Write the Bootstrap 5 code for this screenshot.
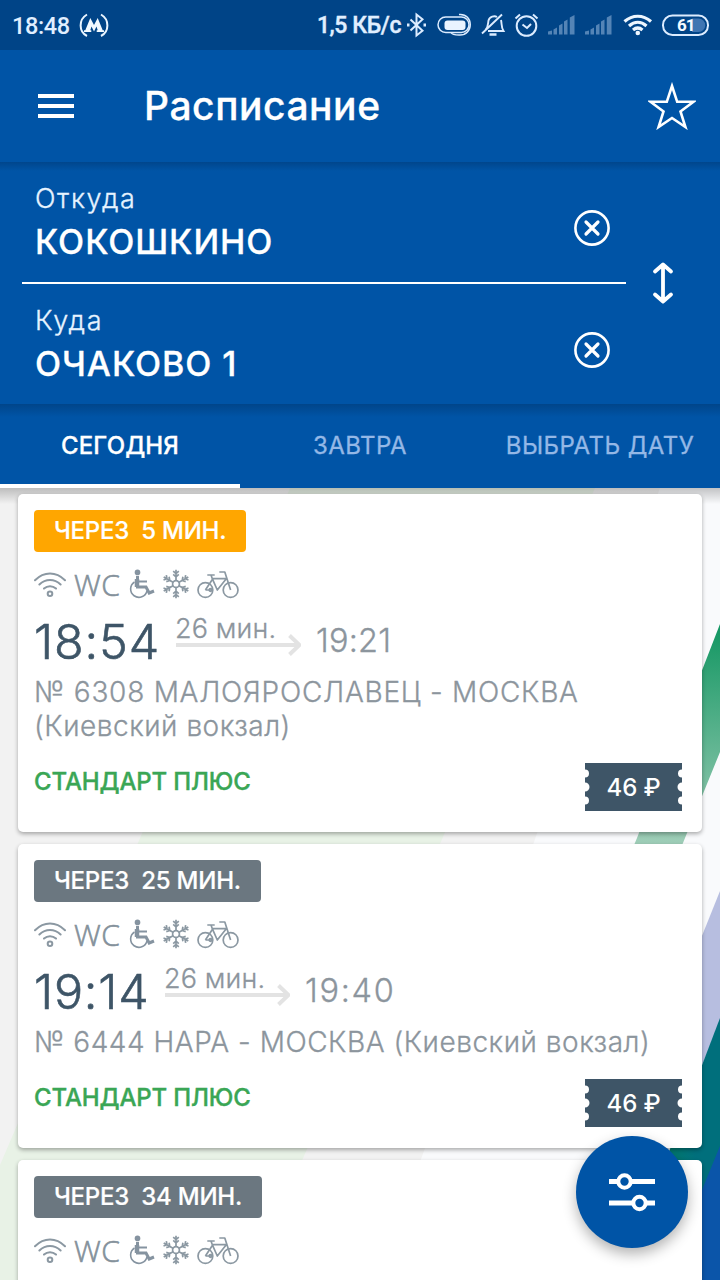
<!DOCTYPE html>
<html lang="ru">
<head>
<meta charset="utf-8">
<meta name="viewport" content="width=device-width, initial-scale=1">
<title>Расписание</title>
<link href="https://cdn.jsdelivr.net/npm/bootstrap@5.3.0/dist/css/bootstrap.min.css" rel="stylesheet">
<style>
:root{--rail:#0054a6;--ink:#3e5567;--dim:#8c959d}
body{height:1280px;overflow:hidden;background:#f9fafc;font-family:Inter,"Open Sans",sans-serif;line-height:1;color:var(--dim)}
svg{display:block;flex:none}
.statusbar{height:50px;background:#004487;color:#e0efff;font:500 23.5px/52px Roboto,sans-serif;padding:2px 4px 0 12px}
.clock{letter-spacing:-.35px}
.rate{font-size:23px;letter-spacing:-.4px;-webkit-text-stroke:.4px}
.topbar{height:112px;background:var(--rail);color:#fff;padding:0 24px 0 38px}
.title{font-size:39px;line-height:48px;font-weight:500;letter-spacing:.55px;margin-left:70px;-webkit-text-stroke:.3px}
.search{height:242px;background:linear-gradient(#00468c,#0054a6 9px);color:#fff;padding-left:22px}
.fields{width:604px}
.field{height:120px;padding:20px 16px 0 13px}
.field-from{height:122px;border-bottom:2px solid #fff}
.lbl{font-size:27px;line-height:34px;font-weight:300;letter-spacing:1.6px;margin-bottom:6px;color:#e6f3ff;-webkit-text-stroke:.3px}
.station{font-size:34px;line-height:40px;font-weight:500;letter-spacing:.95px;white-space:nowrap;-webkit-text-stroke:.3px}
.clear{margin-top:28px}
.swap{margin:98px 0 0 24px}
.tabs{height:84px;background:linear-gradient(#00458a,#0054a6 13px);color:#94b8e6;font-size:24px;font-weight:400;white-space:nowrap}
.tab-item{line-height:84px;letter-spacing:.45px;-webkit-text-stroke:.3px}
.tab-on{color:#fff;font-weight:500;letter-spacing:.1px;box-shadow:inset 0 -4px #fff}
.sheet{height:792px;overflow:hidden;padding:6px 18px 0}
.backdrop{z-index:0}
.drop{height:16px;background:linear-gradient(rgba(0,0,0,.22),rgba(0,0,0,0));z-index:0}
.trip{z-index:1;background:#fff;border-radius:5px;padding:16px 20px 21px 16px;margin-bottom:12px;box-shadow:0 2px 4px rgba(0,0,0,.32)}
.due{height:42px;border-radius:4px;background:#6b7780;color:#fff;font-size:24px;line-height:42px;font-weight:500;padding:0 20px;white-space:pre;letter-spacing:-.25px;-webkit-text-stroke:.2px}
.soon{background:#ffa600}
.amenities{height:44px;margin-top:10px}
.wc{font:300 30px/44px "Open Sans",sans-serif;color:#84919b;width:47px;margin:1px 8px 0 8px;-webkit-text-stroke:.6px #84919b;letter-spacing:.4px}
.gap-ic{margin-left:7px}
.times{height:68px}
.dep{font-size:48.5px;line-height:71px;font-weight:300;color:var(--ink);-webkit-text-stroke:.6px var(--ink);white-space:nowrap}
.dep-a{width:142px;letter-spacing:.9px}
.dep-b{width:131px;letter-spacing:.8px}
.ride{width:125px;padding-top:6px;font-size:27px;line-height:34px;font-weight:300;letter-spacing:.15px;white-space:nowrap;-webkit-text-stroke:.3px;margin-left:-1px}
.ride svg{margin:-12px 0 0 1px}
.arr{font-size:32.5px;line-height:69px;font-weight:300;margin-left:16px;-webkit-text-stroke:.3px}
.arr-a{letter-spacing:.2px}
.arr-b{letter-spacing:1.7px}
.route{font-size:28px;line-height:34px;font-weight:300;letter-spacing:.75px;white-space:nowrap;-webkit-text-stroke:.3px;position:relative;top:1px}
.route-b,.depot{letter-spacing:.53px}
.foot{margin-top:21px}
.klass{color:#3aa655;font-size:24px;line-height:37px;font-weight:500;letter-spacing:-.15px;-webkit-text-stroke:.35px}
.ticket{width:97px;height:48px}
.price{color:#fff;font-size:24px;font-weight:500;line-height:49px;white-space:nowrap;letter-spacing:-.1px}
.fab{left:576px;top:1136px;width:112px;height:112px;background:var(--rail);box-shadow:0 6px 14px rgba(0,0,0,.3);z-index:3}
</style>
</head>
<body class="position-relative">

<svg class="d-none">
  <symbol id="i-wifi" viewBox="0 0 32 28"><g fill="none" stroke="#8b98a2" stroke-width="2" stroke-linecap="round"><path d="M1 10.200C10 1.200 22 1.200 31 10.200M5.400 14.500c6.200-5.900 15-5.900 21.200 0M10 18.600c3.500-3.200 8.500-3.200 12 0"/><circle cx="16" cy="23.800" r="2.300"/></g></symbol>
  <symbol id="i-chair" viewBox="0 0 26 30"><g fill="none" stroke="#8593a0"><circle cx="8.500" cy="3.400" r="2.800" fill="#8593a0" stroke="none"/><path d="M8.500 7v11h8.500l3.200 6 4.800-2" stroke-width="3"/><path d="M8 10v8" stroke-width="4.500"/><path d="M8 12.500h10" stroke-width="2"/><path d="M5.500 13A8.300 8.300 0 1 0 18 22" stroke-width="1.600"/></g></symbol>
  <symbol id="i-snow" viewBox="0 0 28 30"><g fill="none" stroke="#8b98a2" stroke-width="1.700"><circle cx="14" cy="15" r="3.400"/>
    <g id="ray"><path d="M14 11.600V.8M11.200 2.200 14 4.600l2.800-2.400M11.200 5.400 14 7.800l2.800-2.400"/></g>
    <use href="#ray" transform="rotate(60 14 15)"/><use href="#ray" transform="rotate(120 14 15)"/><use href="#ray" transform="rotate(180 14 15)"/><use href="#ray" transform="rotate(240 14 15)"/><use href="#ray" transform="rotate(300 14 15)"/></g></symbol>
  <symbol id="i-bike" viewBox="0 0 42 30"><g fill="none" stroke="#8b98a2" stroke-width="1.700" stroke-linejoin="round"><circle cx="8.400" cy="21" r="7.400"/><circle cx="33.600" cy="21" r="7.400"/><path d="M10.300 6h7.400M14 6l1.500 4.200M8.400 21 15.500 10.200 20.300 21 29.300 9.700H15.300M8.400 21h6.400M33.600 21 27.800 3h-5.500"/><circle cx="13.500" cy="21" r="1.300"/></g></symbol>
  <symbol id="i-go" viewBox="0 0 125 22"><path d="M0 11h123M113.500 1.500l10 9.500-10 9.500" fill="none" stroke="#e3e3e3" stroke-width="4"/></symbol>
  <symbol id="i-ticket" viewBox="0 0 97 48"><path fill="#3e5567" d="M0 0H97V6.500a4 4 0 0 0 0 8V19.500a4 4 0 0 0 0 9V33.500a4 4 0 0 0 0 8V48H0V41.500a4 4 0 0 0 0-8V28.500a4 4 0 0 0 0-9V14.500a4 4 0 0 0 0-8Z"/></symbol>
  <symbol id="i-clear" viewBox="0 0 36 36"><g fill="none" stroke="#fff" stroke-linecap="round"><circle cx="18" cy="18" r="16.600" stroke-width="2.600"/><path d="M12 12l12 12M24 12 12 24" stroke-width="3.200"/></g></symbol>
</svg>

<header class="statusbar d-flex align-items-center">
  <span class="clock">18:48</span>
  <svg width="30" height="28" viewBox="0 0 30 28" style="margin-left:9px"><g fill="none" stroke="#e9f5ff" stroke-width="2"><path d="M8 2.500C-.5 7.500-.5 19.500 8 24M22 2.500c8.500 5 8.500 17 0 21.500"/></g><path fill="#f2faff" d="M5 20v-1.800h1.300L11.300 6 15 13l3.700-7 5 12.200H25V20h-7.300v-1.800h1l-1.200-3.700L15 19.500l-2.500-5-1.200 3.700h1V20Z"/></svg>
  <span class="rate ms-auto">1,5 КБ/с</span>
  <svg width="312" height="30" viewBox="404 11 312 30" style="margin-left:3px">
    <g fill="none" stroke="#dcecff" stroke-width="2">
      <path d="M410.500 19.500l12 11.200-6 4.800V14.500l6 4.800-12 11.200"/>
      <path d="M407 25h2.500M423.500 25h2.500" stroke-width="3"/>
      <rect x="438" y="17" width="31" height="15.500" rx="7.700" stroke-width="1.500"/>
      <path d="M459 14.500c15-1.500 15 21.500 0 20.500-4 0-7-.5-8-2.500" stroke-width="1.500"/>
      <path d="M482 33.500 502 14.500M485.500 30c3-3 2.300-6.500 3-9.500 1-4 6-5 8.500-3.500M501 20c1 4 0 7 2.500 11H488" stroke-width="1.900"/>
      <path d="M489.500 34.500h7" stroke-width="2.500"/>
      <circle cx="526.500" cy="26" r="9.800"/><path d="M522.500 24.500l4.500 3.500 4-4M515.500 18.500l4.500-4M537.500 18.500l-4.500-4"/>
      <rect x="663" y="15.500" width="45" height="19.500" rx="9.500"/>
    </g>
    <rect x="444.500" y="20.500" width="21" height="9.500" rx="3" fill="#eaf4ff"/>
    <g id="sig" fill="#5484b6"><path d="M548 34.500v-3l4-1v4zM553.500 34.500v-5l3.500-2v7zM559 34.500v-9l3.500-2v11zM564 34.500v-13l3.500-2v15zM569.800 34.500v-17l4.700-2.500v19.500z"/></g>
    <use href="#sig" x="37"/>
    <g fill="none" stroke="#eef7ff" stroke-width="3.200"><path d="M624.500 21.500c8-7 18.500-7 26.500 0M629 26c5.500-4.800 12-4.800 17.500 0M633 30c3-2.500 6.500-2.500 9.500 0"/></g>
    <circle cx="637.800" cy="33" r="2.300" fill="#eef7ff"/>
    <path d="M692 18.500h6.500a6.700 6.700 0 0 1 0 13.500H692z" fill="#3f75b2"/>
    <text x="677" y="31.300" font-family="Roboto" font-weight="700" font-size="17" letter-spacing="-1" fill="#f4faff">61</text>
  </svg>
</header>

<nav class="topbar d-flex align-items-center">
  <svg width="36" height="24" viewBox="0 0 36 24"><path d="M0 2h36M0 12h36M0 22h36" stroke="#fff" stroke-width="4"/></svg>
  <div class="title">Расписание</div>
  <svg class="ms-auto" width="48" height="48" viewBox="0 0 48 48"><path d="M24 4 29.200 19.800H45.500L32.500 29.500l4.900 15.500L24 36 10.600 45l4.900-15.500L2.500 19.800H18.800Z" fill="none" stroke="#fff" stroke-width="2.600"/></svg>
</nav>

<section class="search d-flex">
  <div class="fields">
    <div class="field field-from d-flex justify-content-between align-items-start">
      <div><div class="lbl">Откуда</div><div class="station">КОКОШКИНО</div></div>
      <svg class="clear" width="36" height="36"><use href="#i-clear"/></svg>
    </div>
    <div class="field d-flex justify-content-between align-items-start">
      <div><div class="lbl">Куда</div><div class="station">ОЧАКОВО 1</div></div>
      <svg class="clear" width="36" height="36"><use href="#i-clear"/></svg>
    </div>
  </div>
  <svg class="swap" width="26" height="46" viewBox="0 0 26 46"><path d="M13 5v36M5 11.500l8-7 8 7M5 34.500l8 7 8-7" fill="none" stroke="#fff" stroke-width="3.800" stroke-linecap="round" stroke-linejoin="round"/></svg>
</section>

<nav class="tabs row g-0 text-center">
  <div class="col-4 tab-item tab-on">СЕГОДНЯ</div>
  <div class="col-4 tab-item">ЗАВТРА</div>
  <div class="col-4 tab-item">ВЫБРАТЬ ДАТУ</div>
</nav>

<main class="sheet position-relative">
  <svg class="backdrop position-absolute top-0 start-0" width="720" height="792" viewBox="0 488 720 792">
    <defs>
      <linearGradient id="gr" x1="0" y1="620" x2="0" y2="850" gradientUnits="userSpaceOnUse"><stop offset="0" stop-color="#0f9560"/><stop offset="1" stop-color="#a3cfba"/></linearGradient>
      <linearGradient id="gt" x1="660" y1="0" x2="720" y2="0" gradientUnits="userSpaceOnUse"><stop offset="0" stop-color="#00806c"/><stop offset=".6" stop-color="#006f7c"/></linearGradient>
    </defs>
    <path fill="#f2f2f2" d="M0 488H660L378 1280H0z"/>
    <path fill="#e8f2e6" d="M290 488H595L250 1280H0V1165z"/>
    <path fill="url(#gr)" d="M720 624V752L685 838 640 950H590L637 838z"/>
    <path fill="#b7bee0" d="M720 891V1022L650 1190H600z"/>
    <path fill="url(#gt)" d="M720 1018V1280H620z"/>
    <path fill="#0b55a9" d="M720 1146V1280H665z"/>
  </svg>
  <div class="drop position-absolute top-0 start-0 end-0"></div>

  <article class="trip position-relative">
    <div class="d-flex"><div class="due soon">ЧЕРЕЗ  5 МИН.</div></div>
    <div class="amenities d-flex align-items-center">
      <svg width="32" height="28"><use href="#i-wifi"/></svg><span class="wc">WC</span>
      <svg width="26" height="30"><use href="#i-chair"/></svg>
      <svg class="gap-ic" width="28" height="30"><use href="#i-snow"/></svg>
      <svg class="gap-ic" width="42" height="30"><use href="#i-bike"/></svg>
    </div>
    <div class="times d-flex">
      <div class="dep dep-a">18:54</div>
      <div class="ride">26 мин.<svg width="125" height="22"><use href="#i-go"/></svg></div>
      <div class="arr arr-a">19:21</div>
    </div>
    <div class="route">№ 6308 МАЛОЯРОСЛАВЕЦ - МОСКВА<br><span class="depot">(Киевский вокзал)</span></div>
    <div class="foot d-flex justify-content-between align-items-start">
      <div class="klass">СТАНДАРТ ПЛЮС</div>
      <div class="ticket position-relative"><svg class="position-absolute top-0 start-0" width="97" height="48"><use href="#i-ticket"/></svg><div class="price position-relative text-center">46 ₽</div></div>
    </div>
  </article>

  <article class="trip position-relative">
    <div class="d-flex"><div class="due">ЧЕРЕЗ  25 МИН.</div></div>
    <div class="amenities d-flex align-items-center">
      <svg width="32" height="28"><use href="#i-wifi"/></svg><span class="wc">WC</span>
      <svg width="26" height="30"><use href="#i-chair"/></svg>
      <svg class="gap-ic" width="28" height="30"><use href="#i-snow"/></svg>
      <svg class="gap-ic" width="42" height="30"><use href="#i-bike"/></svg>
    </div>
    <div class="times d-flex">
      <div class="dep dep-b">19:14</div>
      <div class="ride">26 мин.<svg width="125" height="22"><use href="#i-go"/></svg></div>
      <div class="arr arr-b">19:40</div>
    </div>
    <div class="route route-b">№ 6444 НАРА - МОСКВА (Киевский вокзал)</div>
    <div class="foot d-flex justify-content-between align-items-start">
      <div class="klass">СТАНДАРТ ПЛЮС</div>
      <div class="ticket position-relative"><svg class="position-absolute top-0 start-0" width="97" height="48"><use href="#i-ticket"/></svg><div class="price position-relative text-center">46 ₽</div></div>
    </div>
  </article>

  <article class="trip position-relative">
    <div class="d-flex"><div class="due">ЧЕРЕЗ  34 МИН.</div></div>
    <div class="amenities d-flex align-items-center">
      <svg width="32" height="28"><use href="#i-wifi"/></svg><span class="wc">WC</span>
      <svg width="26" height="30"><use href="#i-chair"/></svg>
      <svg class="gap-ic" width="28" height="30"><use href="#i-snow"/></svg>
      <svg class="gap-ic" width="42" height="30"><use href="#i-bike"/></svg>
    </div>
  </article>
</main>

<button class="fab btn position-absolute rounded-circle border-0 p-0 d-flex align-items-center justify-content-center" aria-label="Фильтр">
  <svg width="46" height="40" viewBox="0 0 46 40"><path d="M0 9.500h46M0 31h46" stroke="#fff" stroke-width="5"/><circle cx="15.500" cy="9.500" r="6.200" fill="#0054a6" stroke="#fff" stroke-width="4"/><circle cx="30.500" cy="31" r="6.200" fill="#0054a6" stroke="#fff" stroke-width="4"/></svg>
</button>
<script src="https://cdn.jsdelivr.net/npm/bootstrap@5.3.0/dist/js/bootstrap.bundle.min.js"></script>
</body>
</html>
